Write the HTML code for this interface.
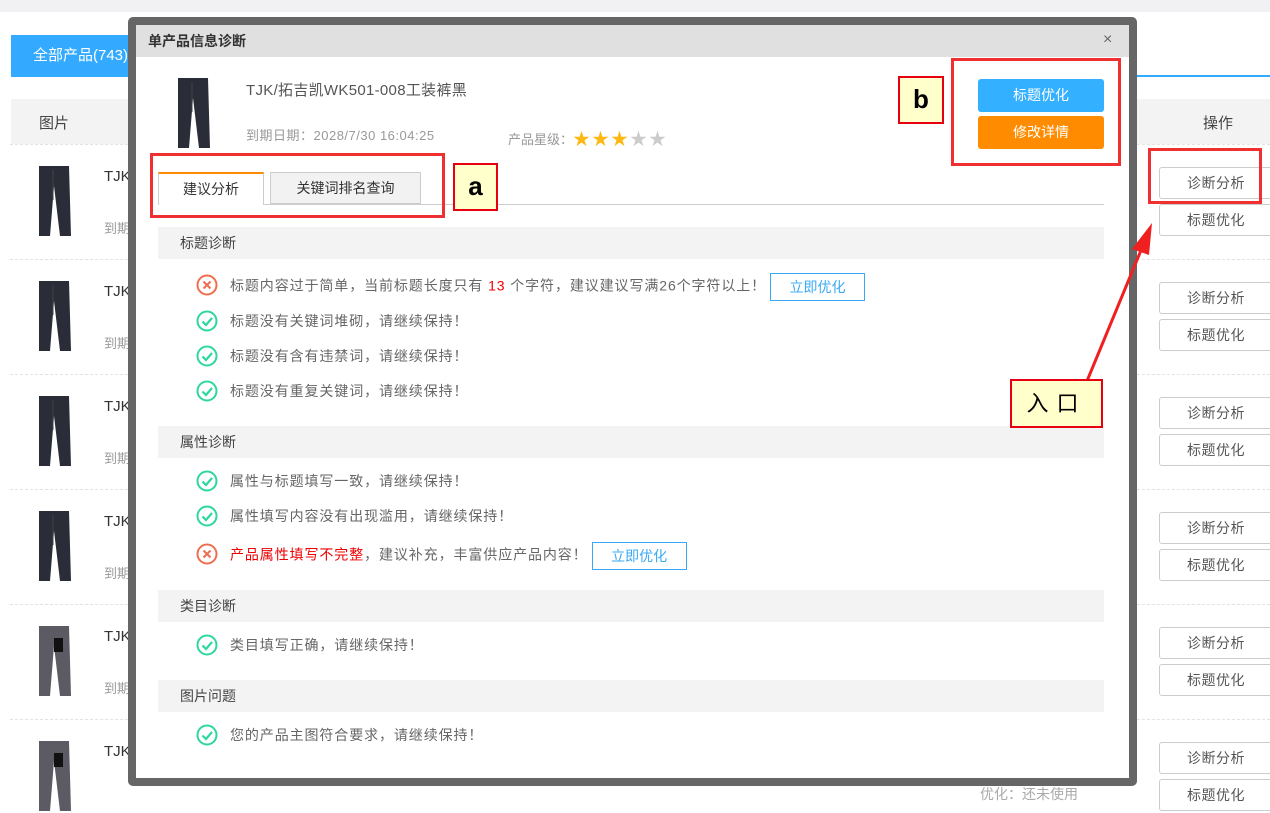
<!DOCTYPE html>
<html><head><meta charset="utf-8">
<style>
*{margin:0;padding:0;box-sizing:border-box}
body{width:1270px;height:794px;overflow:hidden;background:#fff;font-family:"Liberation Sans","Noto Sans CJK SC",sans-serif;font-size:14px;color:#555;position:relative}
.a{position:absolute}
.btn{position:absolute;left:1159px;width:120px;height:32px;border:1px solid #ccc;border-radius:3px;background:#fff;text-align:center;line-height:30px;color:#555;font-size:14px;padding-right:6px;letter-spacing:0.5px}
.sep{position:absolute;left:10px;width:1260px;border-top:1px dashed #e3e3e3}
.sec{position:absolute;left:158px;width:946px;height:32px;background:#f3f3f3;line-height:32px;padding-left:22px;color:#444}
.row{position:absolute;left:196px;height:24px;line-height:24px;white-space:nowrap;color:#666}
.row svg{position:absolute;left:0;top:1px}
.row span.t{position:absolute;left:34px;top:0;letter-spacing:0.9px}
.ob{display:inline-block;border:1px solid #3aa9f5;color:#3aa9f5;width:95px;height:28px;line-height:26px;text-align:center;margin-left:4px;vertical-align:middle;letter-spacing:0}
.lbl{position:absolute;background:#ffffcc;border:2px solid #e60012;font-weight:bold;color:#000;text-align:center}
.rb{position:absolute;border:3px solid #f03030}
</style></head><body>
<div class="a" style="left:0;top:0;width:1270px;height:12px;background:#f1f1f3"></div>
<div class="a" style="left:11px;top:35px;width:140px;height:41px;background:#33aaff;color:#fff;font-size:15px;line-height:41px;padding-left:22px">全部产品(743)</div>
<div class="a" style="left:11px;top:75px;width:1259px;height:2px;background:#33aaff"></div>
<div class="a" style="left:11px;top:99px;width:1259px;height:45px;background:#f3f3f3"></div>
<div class="a" style="left:39px;top:112px;font-size:15px;color:#444">图片</div>
<div class="a" style="left:1203px;top:112px;font-size:15px;color:#444">操作</div>

<svg width="0" height="0" style="position:absolute"><defs>
<g id="pd"><path d="M3 0h30l2 70h-11l-6-50-4 50H3z" fill="#2a2d38"/><path d="M17 4v30" stroke="#444" stroke-width="1"/></g>
<g id="pg"><path d="M3 0h30l2 70h-11l-6-50-4 50H3z" fill="#5c5a63"/><rect x="18" y="12" width="9" height="14" fill="#111"/></g>
</defs></svg>

<div class="sep" style="top:144px"></div>
<svg class="a" style="left:36px;top:166px" width="36" height="72"><use href="#pd"/></svg>
<div class="a" style="left:104px;top:168px;color:#333;font-size:15px">TJK</div><div class="a" style="left:104px;top:218px;color:#999;font-size:13px">到期</div>
<div class="btn" style="top:167px">诊断分析</div><div class="btn" style="top:204px">标题优化</div>
<div class="sep" style="top:259px"></div>
<svg class="a" style="left:36px;top:281px" width="36" height="72"><use href="#pd"/></svg>
<div class="a" style="left:104px;top:283px;color:#333;font-size:15px">TJK</div><div class="a" style="left:104px;top:333px;color:#999;font-size:13px">到期</div>
<div class="btn" style="top:282px">诊断分析</div><div class="btn" style="top:319px">标题优化</div>
<div class="sep" style="top:374px"></div>
<svg class="a" style="left:36px;top:396px" width="36" height="72"><use href="#pd"/></svg>
<div class="a" style="left:104px;top:398px;color:#333;font-size:15px">TJK</div><div class="a" style="left:104px;top:448px;color:#999;font-size:13px">到期</div>
<div class="btn" style="top:397px">诊断分析</div><div class="btn" style="top:434px">标题优化</div>
<div class="sep" style="top:489px"></div>
<svg class="a" style="left:36px;top:511px" width="36" height="72"><use href="#pd"/></svg>
<div class="a" style="left:104px;top:513px;color:#333;font-size:15px">TJK</div><div class="a" style="left:104px;top:563px;color:#999;font-size:13px">到期</div>
<div class="btn" style="top:512px">诊断分析</div><div class="btn" style="top:549px">标题优化</div>
<div class="sep" style="top:604px"></div>
<svg class="a" style="left:36px;top:626px" width="36" height="72"><use href="#pg"/></svg>
<div class="a" style="left:104px;top:628px;color:#333;font-size:15px">TJK</div><div class="a" style="left:104px;top:678px;color:#999;font-size:13px">到期</div>
<div class="btn" style="top:627px">诊断分析</div><div class="btn" style="top:664px">标题优化</div>
<div class="sep" style="top:719px"></div>
<svg class="a" style="left:36px;top:741px" width="36" height="72"><use href="#pg"/></svg>
<div class="a" style="left:104px;top:743px;color:#333;font-size:15px">TJK</div>
<div class="btn" style="top:742px">诊断分析</div><div class="btn" style="top:779px">标题优化</div>
<div class="a" style="left:980px;top:784px;color:#aaa">优化：还未使用</div>

<div class="a" style="left:128px;top:17px;width:1009px;height:769px;background:#666;border-radius:5px"></div>
<div class="a" style="left:136px;top:25px;width:993px;height:753px;background:#fff"></div>
<div class="a" style="left:136px;top:25px;width:993px;height:32px;background:#dfe0df;line-height:32px;padding-left:12px;font-size:14px;color:#333;font-weight:bold">单产品信息诊断</div>
<div class="a" style="left:1103px;top:31px;font-size:16px;color:#666">×</div>

<svg class="a" style="left:175px;top:78px" width="36" height="72"><use href="#pd"/></svg>
<div class="a" style="left:246px;top:79px;font-size:15px;color:#555;letter-spacing:0.3px">TJK/拓吉凯WK501-008工装裤黑</div>
<div class="a" style="left:246px;top:125px;font-size:13px;color:#999;letter-spacing:0.5px">到期日期：2028/7/30 16:04:25</div>
<div class="a" style="left:508px;top:125px;font-size:13px;color:#999">产品星级：<span style="color:#fdb813;font-size:17px;letter-spacing:2px;vertical-align:-1px">★★★</span><span style="color:#ccc;font-size:17px;letter-spacing:2px;vertical-align:-1px">★★</span></div>

<div class="a" style="left:978px;top:79px;width:126px;height:33px;background:#33b0ff;border-radius:3px;color:#fff;text-align:center;line-height:33px">标题优化</div>
<div class="a" style="left:978px;top:116px;width:126px;height:33px;background:#ff8c00;border-radius:3px;color:#fff;text-align:center;line-height:33px">修改详情</div>

<div class="a" style="left:158px;top:204px;width:946px;height:1px;background:#ccc"></div>
<div class="a" style="left:158px;top:172px;width:106px;height:33px;background:#fff;border:1px solid #ccc;border-top:2px solid #ff8c00;border-bottom:none;text-align:center;line-height:31px;color:#333">建议分析</div>
<div class="a" style="left:270px;top:172px;width:151px;height:32px;background:#f2f2f2;border:1px solid #ccc;text-align:center;line-height:30px;color:#333">关键词排名查询</div>

<svg width="0" height="0" style="position:absolute"><defs>
<g id="ok"><circle cx="11" cy="11" r="9.5" fill="none" stroke="#2ed6a0" stroke-width="2"/><path d="M6.5 11.5l3.5 3.5 6-7" fill="none" stroke="#2ed6a0" stroke-width="2.2"/></g>
<g id="no"><circle cx="11" cy="11" r="9.5" fill="none" stroke="#f06d4f" stroke-width="2"/><path d="M7.5 7.5l7 7M14.5 7.5l-7 7" stroke="#f06d4f" stroke-width="2"/></g>
</defs></svg>

<div class="sec" style="top:227px">标题诊断</div>
<div class="row" style="top:273px"><svg width="22" height="22"><use href="#no"/></svg><span class="t">标题内容过于简单，当前标题长度只有 <span style="color:#e00">13</span> 个字符，建议建议写满26个字符以上！<span class="ob">立即优化</span></span></div>
<div class="row" style="top:309px"><svg width="22" height="22"><use href="#ok"/></svg><span class="t">标题没有关键词堆砌，请继续保持！</span></div>
<div class="row" style="top:344px"><svg width="22" height="22"><use href="#ok"/></svg><span class="t">标题没有含有违禁词，请继续保持！</span></div>
<div class="row" style="top:379px"><svg width="22" height="22"><use href="#ok"/></svg><span class="t">标题没有重复关键词，请继续保持！</span></div>

<div class="sec" style="top:426px">属性诊断</div>
<div class="row" style="top:469px"><svg width="22" height="22"><use href="#ok"/></svg><span class="t">属性与标题填写一致，请继续保持！</span></div>
<div class="row" style="top:504px"><svg width="22" height="22"><use href="#ok"/></svg><span class="t">属性填写内容没有出现滥用，请继续保持！</span></div>
<div class="row" style="top:542px"><svg width="22" height="22"><use href="#no"/></svg><span class="t"><span style="color:#e00">产品属性填写不完整</span>，建议补充，丰富供应产品内容！<span class="ob">立即优化</span></span></div>

<div class="sec" style="top:590px">类目诊断</div>
<div class="row" style="top:633px"><svg width="22" height="22"><use href="#ok"/></svg><span class="t">类目填写正确，请继续保持！</span></div>

<div class="sec" style="top:680px">图片问题</div>
<div class="row" style="top:723px"><svg width="22" height="22"><use href="#ok"/></svg><span class="t">您的产品主图符合要求，请继续保持！</span></div>

<div class="rb" style="left:150px;top:153px;width:295px;height:65px"></div>
<div class="lbl" style="left:453px;top:163px;width:45px;height:48px;font-size:26px;line-height:42px">a</div>
<div class="rb" style="left:951px;top:58px;width:170px;height:108px"></div>
<div class="lbl" style="left:898px;top:76px;width:46px;height:48px;font-size:26px;line-height:42px">b</div>
<div class="rb" style="left:1148px;top:148px;width:114px;height:56px"></div>
<svg class="a" style="left:1060px;top:215px" width="100" height="170"><line x1="27" y1="166" x2="84" y2="28" stroke="#f02020" stroke-width="3"/><polygon points="92,8 72,34 89,40" fill="#f02020"/></svg>
<div class="lbl" style="left:1010px;top:379px;width:93px;height:49px;font-size:22px;line-height:45px;font-weight:normal;letter-spacing:8px">入口</div>
</body></html>
